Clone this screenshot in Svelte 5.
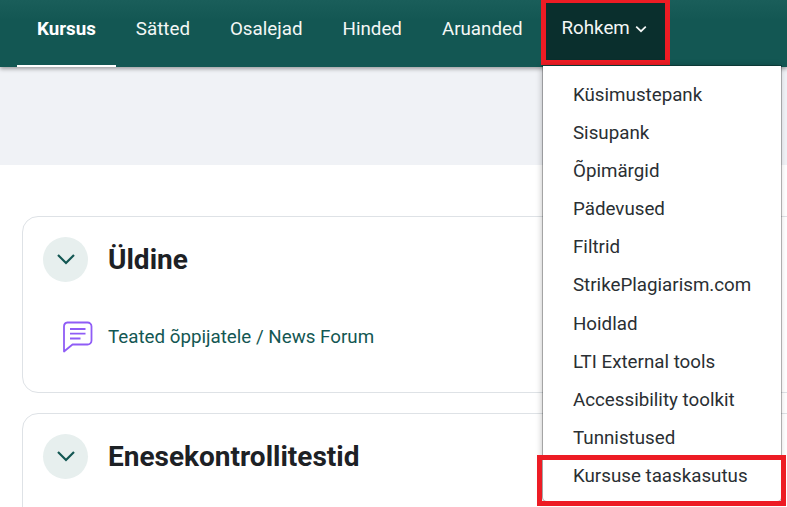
<script>
  const tabs = ["Kursus", "Sätted", "Osalejad", "Hinded", "Aruanded"];
  const more = [
    "Küsimustepank",
    "Sisupank",
    "Õpimärgid",
    "Pädevused",
    "Filtrid",
    "StrikePlagiarism.com",
    "Hoidlad",
    "LTI External tools",
    "Accessibility toolkit",
    "Tunnistused",
    "Kursuse taaskasutus",
  ];
</script>

<div class="page">
  <nav class="nav">
    {#each tabs as tab, i}
      <a class="tab" class:active={i === 0} href="#top">{tab}</a>
    {/each}
    <div class="moreWrap">
      <button class="more">
        Rohkem
        <svg class="caret" width="12" height="8" viewBox="0 0 12 8" fill="none">
          <path d="M1.2 1.6 6 6.200l4.800-4.600" stroke="currentColor" stroke-width="1.700" />
        </svg>
      </button>
      <ul class="menu">
        {#each more as item, i}
          <li class:marked={i === more.length - 1}>{item}</li>
        {/each}
      </ul>
    </div>
  </nav>

  <div class="band"></div>

  <main class="content">
    <section class="card first">
      <header class="cardHead">
        <span class="toggle">
          <svg width="20" height="13" viewBox="0 0 20 13" fill="none">
            <path d="M2 2 10 10 18 2" stroke="currentColor" stroke-width="2.200" />
          </svg>
        </span>
        <h2>Üldine</h2>
      </header>
      <div class="activity">
        <svg class="forum" width="32" height="32" viewBox="0 0 32 32" fill="none">
          <path
            d="M5.500 1.500h20a4 4 0 0 1 4 4v14a4 4 0 0 1-4 4H10.500L2 30.500V5.500a4 4 0 0 1 3.500-4Z"
            stroke="currentColor"
            stroke-width="1.800"
            stroke-linejoin="round"
          />
          <path
            d="M8 8h15.500M8 12.700h15.500M8 17.500h10.500"
            stroke="currentColor"
            stroke-width="1.800"
          />
        </svg>
        <a href="#top">Teated õppijatele / News Forum</a>
      </div>
    </section>

    <section class="card">
      <header class="cardHead">
        <span class="toggle">
          <svg width="20" height="13" viewBox="0 0 20 13" fill="none">
            <path d="M2 2 10 10 18 2" stroke="currentColor" stroke-width="2.200" />
          </svg>
        </span>
        <h2>Enesekontrollitestid</h2>
      </header>
    </section>
  </main>
</div>

<style>
  :global(body) {
    margin: 0;
    background: #fff;
    overflow: hidden;
  }

  .page {
    height: 507px;
    overflow: hidden;
    font-family: Roboto, "Liberation Sans", sans-serif;
    font-size: 18.75px;
    color: #1d2125;
  }

  .nav {
    position: relative;
    z-index: 2;
    display: flex;
    height: 67px;
    padding-left: 17px;
    background: linear-gradient(#1a5e5a, #135753 30%);
    box-shadow: 0 2px 4px rgba(0, 0, 0, 0.35);
  }

  .tab {
    display: flex;
    align-items: center;
    padding: 0 20px 10px;
    color: #f4f7f6;
    text-decoration: none;
  }

  .tab.active {
    font-weight: 700;
    color: #fff;
    box-shadow: inset 0 -2px 0 #fff;
  }

  .moreWrap {
    position: relative;
  }

  .more {
    display: flex;
    align-items: center;
    gap: 5px;
    width: 129px;
    height: 65px;
    margin-left: -1px;
    padding: 0 0 7px 15px;
    border: 5px solid #ed1c24;
    border-top-width: 3px;
    box-sizing: border-box;
    background: #0a2f2d;
    color: #f4f7f6;
    font: inherit;
  }

  .caret {
    margin-top: 1px;
  }

  .menu {
    position: absolute;
    top: 66px;
    left: 1px;
    width: 238px;
    height: 435px;
    margin: 0;
    padding: 10px 0 0;
    box-sizing: border-box;
    list-style: none;
    background: #fff;
    border-radius: 0 0 4px 4px;
    box-shadow: 0 0 0 1px rgba(0, 0, 0, 0.25), -1px 0 6px rgba(0, 0, 0, 0.25);
  }

  .menu li {
    position: relative;
    height: 38.1px;
    padding-left: 29.5px;
    line-height: 38.1px;
    color: #2a2f33;
  }

  .menu li.marked::after {
    content: "";
    position: absolute;
    top: -2px;
    left: -6px;
    width: 249px;
    height: 51px;
    border: 5px solid #ed1c24;
    box-sizing: border-box;
  }

  .band {
    height: 98px;
    background: #f0f2f6;
  }

  .content {
    display: flex;
    flex-direction: column;
    gap: 20px;
    padding: 51px 0 0 22px;
  }

  .card {
    min-height: 176px;
    margin-right: -24px;
    padding: 20px;
    box-sizing: border-box;
    border: 1px solid #dee2e6;
    border-radius: 16px;
  }

  .card.first {
    height: 177px;
  }

  .cardHead {
    display: flex;
    align-items: center;
    gap: 20px;
  }

  .toggle {
    display: flex;
    align-items: center;
    justify-content: center;
    width: 45px;
    height: 45px;
    border-radius: 50%;
    background: #e7efee;
    color: #135753;
  }

  h2 {
    margin: 0;
    font-size: 28px;
    font-weight: 700;
    color: #1d2125;
  }

  .activity {
    display: flex;
    align-items: center;
    gap: 14px;
    margin: 39px 0 0 19px;
  }

  .forum {
    color: #8f5cf6;
  }

  .activity a {
    color: #135753;
    text-decoration: none;
  }
</style>
